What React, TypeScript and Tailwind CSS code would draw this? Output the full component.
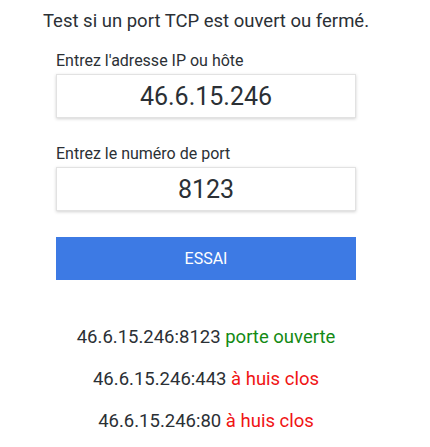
export default function App() {
  const results = [
    { addr: '46.6.15.246:8123', status: 'porte ouverte', open: true },
    { addr: '46.6.15.246:443', status: 'à huis clos', open: false },
    { addr: '46.6.15.246:80', status: 'à huis clos', open: false },
  ]

  return (
    <div className="w-[412px] bg-white pt-[9px] font-['Roboto',sans-serif] text-[#2b3035]">
      <h1 className="text-center text-[18.5px] leading-[24px] font-normal">
        Test si un port TCP est ouvert ou fermé.
      </h1>

      <div className="mx-auto mt-[18px] w-[300px]">
        <label className="block text-[16px] leading-[20px]">Entrez l'adresse IP ou hôte</label>
        <input
          readOnly
          value="46.6.15.246"
          className="mt-[3px] block h-[44px] w-full border border-[#e2e2e2] bg-white text-center text-[25px] text-[#2b3035] shadow-[0_1px_3px_rgba(0,0,0,0.18)] outline-none"
        />

        <label className="mt-[26px] block text-[16px] leading-[20px]">Entrez le numéro de port</label>
        <input
          readOnly
          value="8123"
          className="mt-[3px] block h-[44px] w-full border border-[#e2e2e2] bg-white text-center text-[25px] text-[#2b3035] shadow-[0_1px_3px_rgba(0,0,0,0.18)] outline-none"
        />

        <button className="mt-[26px] block h-[43px] w-full bg-[#3d7ae4] text-[16px] text-white">
          ESSAI
        </button>
      </div>

      <div className="mt-[36px] flex flex-col items-center">
        {results.map((r) => (
          <p key={r.addr} className="text-[18.5px] leading-[42px]">
            {r.addr}{' '}
            <span className={r.open ? 'text-[#138a13]' : 'text-[#f01414]'}>{r.status}</span>
          </p>
        ))}
      </div>
    </div>
  )
}
